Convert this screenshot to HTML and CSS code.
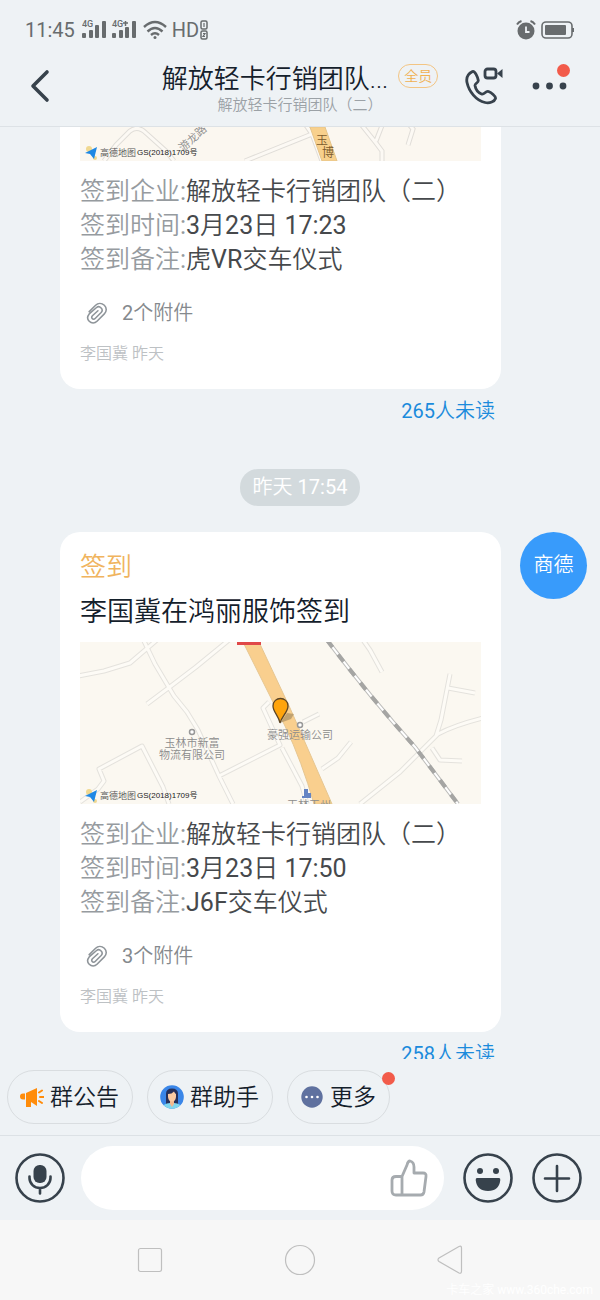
FILE: index.html
```html
<!DOCTYPE html>
<html lang="zh-CN">

<head>
  <meta charset="UTF-8">
  <meta name="viewport" content="width=device-width, initial-scale=1.0">
  <title>解放轻卡行销团队（二）</title>
  <link rel="stylesheet" href="styles.css">
</head>

<body>
  <div class="status-bar">
    <div class="status-left">
      <span class="clock">11:45</span>
      <svg width="56" height="20" viewBox="0 0 56 20" fill="#686c6e">
        <text x="0" y="7" class="net">4G</text>
        <rect x="0" y="13" width="4" height="5" rx="1" />
        <rect x="7" y="10" width="4" height="8" rx="1" />
        <rect x="13" y="5" width="4" height="13" rx="1" />
        <rect x="20" y="1" width="4" height="17" rx="1" />
        <text x="30" y="7" class="net">4G</text>
        <path d="M41 3h5M43.500 1v5" stroke="#686c6e" stroke-width="1.500" />
        <rect x="30" y="13" width="4" height="5" rx="1" />
        <rect x="37" y="10" width="4" height="8" rx="1" />
        <rect x="43" y="7" width="4" height="11" rx="1" />
        <rect x="50" y="1" width="4" height="17" rx="1" />
      </svg>
      <svg width="24" height="20" viewBox="0 0 24 20" fill="none" stroke="#686c6e" stroke-width="2.400">
        <path d="M1 7Q12-3 23 7M4.500 11.500Q12 4.500 19.500 11.500M8 15Q12 11.500 16 15" />
        <circle cx="12" cy="17.500" r="1.500" fill="#686c6e" stroke="none" />
      </svg>
      <span class="hd">HD</span>
      <svg width="8" height="20" viewBox="0 0 8 20">
        <rect x="1" y="1" width="6" height="8" rx="1.500" fill="none" stroke="#686c6e" stroke-width="1.500" />
        <rect x="1" y="11" width="6" height="8" rx="1.500" fill="none" stroke="#686c6e" stroke-width="1.500" />
        <path d="M4 3v4M3 13.500h2L3 16.500h2" fill="none" stroke="#686c6e" stroke-width="1.200" />
      </svg>
    </div>
    <div class="status-right">
      <svg width="20" height="20" viewBox="0 0 20 20">
        <circle cx="10" cy="11" r="8.500" fill="#686c6e" />
        <path d="M1 4.500Q2.500 2 5.500 1M19 4.500Q17.500 2 14.500 1" fill="none" stroke="#686c6e" stroke-width="2" />
        <path d="M10 6.500v5.500h3.500" fill="none" stroke="#eef2f5" stroke-width="1.800" />
      </svg>
      <svg width="34" height="18" viewBox="0 0 34 18">
        <rect x="1" y="1" width="30" height="16" rx="4" fill="none" stroke="#686c6e" stroke-width="1.600" />
        <rect x="4" y="4" width="21" height="10" rx="1" fill="#686c6e" />
        <rect x="31" y="7" width="2" height="4" fill="#686c6e" />
      </svg>
    </div>
  </div>

  <header class="header">
    <button class="icon-btn back" aria-label="返回">
      <svg width="20" height="34" viewBox="0 0 20 34" fill="none" stroke="#37424c" stroke-width="3.600"
        stroke-linecap="round" stroke-linejoin="round">
        <path d="M17 3L3 17l14 14" />
      </svg>
    </button>
    <div class="title-box">
      <div class="title-row">
        <h1>解放轻卡行销团队...</h1>
        <span class="tag">全员</span>
      </div>
      <p class="sub-title">解放轻卡行销团队（二）</p>
    </div>
    <div class="header-actions">
      <button class="icon-btn" aria-label="通话">
        <svg width="40" height="40" viewBox="0 0 40 40" fill="none" stroke="#37424c" stroke-width="2.800"
          stroke-linejoin="round">
          <path
            d="M8.500 5.500C4.500 7.500 2 11.500 3 16.500C5 25.500 12 34.500 21 36.500C26 37.500 30.500 35.500 31.500 32.500C32 30 27 26.500 24.500 25.500C21.500 24.500 20.500 29 17.500 28C14 26.500 11.500 22.500 11 19.500C10.800 17.500 14.500 16.500 14.300 14.500C14 12 11 4.500 8.500 5.500Z" />
          <rect x="21" y="3" width="11" height="9" rx="2.500" />
          <path d="M33 7.500l5.500-4.500v9Z" fill="#37424c" stroke="none" />
        </svg>
      </button>
      <button class="icon-btn more-btn" aria-label="更多设置">
        <svg width="36" height="8" viewBox="0 0 36 8" fill="#37424c">
          <circle cx="4" cy="4" r="3.400" />
          <circle cx="17.500" cy="4" r="3.400" />
          <circle cx="31" cy="4" r="3.400" />
        </svg>
        <i class="dot"></i>
      </button>
    </div>
  </header>

  <main class="messages">
    <div class="message">
      <div class="content">
        <div class="card card-cut">
          <svg class="map" viewBox="0 0 401 34">
            <rect width="401" height="34" fill="#fbf7f0" />
            <g fill="none" stroke="#e0ddd8" stroke-width="5">
              <path d="M24 34L36 18L50 4Q58-2 66 6L86 24L94 34M165 34L232 7L223-6M232 7L242 34M280-4L296 16L302 24V34M296 14L303-4M326-6L333 2L328 18" />
            </g>
            <g fill="none" stroke="#fcf9f4" stroke-width="3">
              <path d="M24 34L36 18L50 4Q58-2 66 6L86 24L94 34M165 34L232 7L223-6M232 7L242 34M280-4L296 16L302 24V34M296 14L303-4M326-6L333 2L328 18" />
            </g>
            <path d="M230 0h15l12 34h-15Z" fill="#f8d08c" stroke="#e5c48a" />
            <text x="236" y="18" class="map-label road">玉</text>
            <text x="242" y="30" class="map-label road">博</text>
            <text x="103" y="25" class="map-label" transform="rotate(-42 103 25)">游龙路</text>
            <circle cx="9" cy="22" r="3" fill="#f0d890" />
            <circle cx="15" cy="31" r="2" fill="#f0d890" />
            <path d="M17 20L5 26l5 1l4 5Z" fill="#1e88e5" />
            <text x="20" y="29" class="map-logo">高德地图</text>
            <text x="57" y="28" class="map-code">GS(2018)1709号</text>
          </svg>
          <dl class="fields">
            <div><dt>签到企业:</dt><dd>解放轻卡行销团队（二）</dd></div>
            <div><dt>签到时间:</dt><dd>3月23日 17:23</dd></div>
            <div><dt>签到备注:</dt><dd>虎VR交车仪式</dd></div>
          </dl>
          <div class="attach">
            <svg width="22" height="22" viewBox="0 0 24 24" fill="none" stroke="#8e9499" stroke-width="1.700"
              stroke-linecap="round" stroke-linejoin="round">
              <path d="M3.500 10.500L10.500 3.500C13 1 17 .8 20 3.500C23 6.500 22.500 10.500 20 13L12 21C9.500 23.500 6 23.500 3.500 21C1 18.500 1.500 15.500 3.500 13L11.500 6C13 4.800 15 5 16.500 6.500C18 8 17.800 10 16.500 11.500L10 18C9 19 7.500 19 6.800 18C6 17 6 16 7 15L13 9.500" />
            </svg>
            <span>2个附件</span>
          </div>
          <p class="from">李国冀 昨天</p>
        </div>
        <a class="unread" href="#">265人未读</a>
      </div>
    </div>

    <time class="time">昨天 17:54</time>

    <div class="message">
      <div class="content">
        <div class="card">
          <p class="card-type">签到</p>
          <h2 class="card-title">李国冀在鸿丽服饰签到</h2>
          <svg class="map" viewBox="0 0 401 162">
            <rect width="401" height="162" fill="#fbf8f1" />
            <g fill="none" stroke="#e4e2dd" stroke-width="5" stroke-linejoin="round">
              <path d="M-2 34L24 29L50 21L78-3M63-3L75 22L94 54L107 70L118 88L139 134L153 162M67 62L91 44L116 25L149-2M0 160L18 147L24 139L19 127L62 104L83 145L89 162M139 134L200 103L183 66L189 60" />
              <path d="M283-2L290 8L302 30M223 80L239 72M242 127L258 116L271 100M280 162L320 130L342 108L358 92Q375 83 403 76M356 94L361 78L370 32M368 46L395 51M352 106L360 118L382 119M202 106L222 144L227 162" />
            </g>
            <g fill="none" stroke="#fdfbf6" stroke-width="3" stroke-linejoin="round">
              <path d="M-2 34L24 29L50 21L78-3M63-3L75 22L94 54L107 70L118 88L139 134L153 162M67 62L91 44L116 25L149-2M0 160L18 147L24 139L19 127L62 104L83 145L89 162M139 134L200 103L183 66L189 60" />
              <path d="M283-2L290 8L302 30M223 80L239 72M242 127L258 116L271 100M280 162L320 130L342 108L358 92Q375 83 403 76M356 94L361 78L370 32M368 46L395 51M352 106L360 118L382 119M202 106L222 144L227 162" />
            </g>
            <!-- railway -->
            <path d="M247-2Q290 55 335 105L378 162" fill="none" stroke="#bdbdbb" stroke-width="4" />
            <path d="M247-2Q290 55 335 105L378 162" fill="none" stroke="#fff" stroke-width="2" />
            <path d="M247-2Q290 55 335 105L378 162" fill="none" stroke="#a5a5a3" stroke-width="4"
              stroke-dasharray="9 9" />
            <!-- main road -->
            <path d="M163 0h16l31 66l42 96h-18Q222 120 205 84Z" fill="#f9cf8e" stroke="#e6c691" />
            <rect x="157" y="0" width="24" height="3" fill="#e04848" />
            <path d="M200 81l7-10l7 1l-3 5Z" fill="#a98e62" opacity=".7" />
            <path d="M200 81C199 74 193 70 193 64C193 54 208 54 208 64C208 70 202 74 200 81Z" fill="#ffa40c"
              stroke="#5c4526" stroke-width="1.300" />
            <circle cx="112" cy="90" r="2.500" fill="#fff" stroke="#989898" stroke-width="1.500" />
            <circle cx="220" cy="83" r="2.500" fill="#fff" stroke="#989898" stroke-width="1.500" />
            <text x="112" y="105" class="map-label mid">玉林市新富</text>
            <text x="112" y="117" class="map-label mid">物流有限公司</text>
            <text x="220" y="97" class="map-label mid">豪强运输公司</text>
            <path d="M222 156v-2h2v-7h4v4h3v5Z" fill="#6484c4" />
            <text x="229" y="167" class="map-label mid">玉林玉州</text>
            <circle cx="9" cy="150" r="3" fill="#f0d890" />
            <circle cx="15" cy="159" r="2" fill="#f0d890" />
            <path d="M17 148L5 154l5 1l4 5Z" fill="#1e88e5" />
            <text x="20" y="157" class="map-logo">高德地图</text>
            <text x="57" y="156" class="map-code">GS(2018)1709号</text>
          </svg>
          <dl class="fields">
            <div><dt>签到企业:</dt><dd>解放轻卡行销团队（二）</dd></div>
            <div><dt>签到时间:</dt><dd>3月23日 17:50</dd></div>
            <div><dt>签到备注:</dt><dd>J6F交车仪式</dd></div>
          </dl>
          <div class="attach">
            <svg width="22" height="22" viewBox="0 0 24 24" fill="none" stroke="#8e9499" stroke-width="1.700"
              stroke-linecap="round" stroke-linejoin="round">
              <path d="M3.500 10.500L10.500 3.500C13 1 17 .8 20 3.500C23 6.500 22.500 10.500 20 13L12 21C9.500 23.500 6 23.500 3.500 21C1 18.500 1.500 15.500 3.500 13L11.500 6C13 4.800 15 5 16.500 6.500C18 8 17.800 10 16.500 11.500L10 18C9 19 7.500 19 6.800 18C6 17 6 16 7 15L13 9.500" />
            </svg>
            <span>3个附件</span>
          </div>
          <p class="from">李国冀 昨天</p>
        </div>
        <a class="unread" href="#">258人未读</a>
      </div>
      <div class="avatar">商德</div>
    </div>
  </main>

  <div class="shortcuts">
    <button class="chip">
      <svg width="24" height="24" viewBox="0 0 24 24" fill="#ff8c0a">
        <path d="M3 8.500h2v6H3Q0 14.500 0 11.500T3 8.500ZM6 8L17 3v18l-6-4v5H6v-7Z" />
        <path d="M19 7.500l3-2M20 12h4M19 16l3 2" stroke="#ff8c0a" stroke-width="2" stroke-linecap="round" />
      </svg>
      <span>群公告</span>
    </button>
    <button class="chip">
      <svg width="24" height="24" viewBox="0 0 24 24">
        <clipPath id="face">
          <circle cx="12" cy="12" r="11.800" />
        </clipPath>
        <g clip-path="url(#face)">
          <rect width="24" height="24" fill="#3a86e8" />
          <path d="M6 19V9Q6 3.500 12 3.500T18 9v10Z" fill="#26305a" />
          <path d="M2 24Q3 18 10 18h4Q21 18 22 24Z" fill="#7fd6ee" />
          <path d="M10 14h4v5l-2 3l-2-3Z" fill="#f2b98e" />
          <path d="M8 9Q12 9 14 6.500Q15 8.500 16 9v3Q15.500 16.500 12 16.500T8 12Z" fill="#fbcaa2" />
        </g>
      </svg>
      <span>群助手</span>
    </button>
    <button class="chip">
      <svg width="24" height="24" viewBox="0 0 24 24">
        <circle cx="12" cy="12" r="10.700" fill="#5f719f" />
        <g fill="#fff">
          <circle cx="6.500" cy="12" r="1.300" />
          <circle cx="12" cy="12" r="1.300" />
          <circle cx="17.500" cy="12" r="1.300" />
        </g>
      </svg>
      <span>更多</span>
      <i class="dot"></i>
    </button>
  </div>

  <div class="input-bar">
    <button class="icon-btn" aria-label="语音">
      <svg width="50" height="50" viewBox="0 0 50 50" fill="none" stroke="#37424c" stroke-width="2.600"
        stroke-linecap="round">
        <circle cx="25" cy="25" r="23.500" />
        <rect x="18.500" y="12" width="13" height="18" rx="6" fill="#37424c" stroke="none" />
        <path d="M14.500 23.500v1.500a10.500 10 0 0 0 21 0v-1.500M25 35v5.500" />
      </svg>
    </button>
    <div class="input-box">
      <input type="text" aria-label="消息">
      <button class="icon-btn" aria-label="点赞">
        <svg width="38" height="38" viewBox="0 0 38 38" fill="none" stroke="#a6abaf" stroke-width="2.800"
          stroke-linejoin="round">
          <path d="M12 17.500L17 6Q18 2 20 2Q24 3 24 8V14H33Q36.500 14 36 17.500L34 33Q33.500 36 30.500 36H6Q2 36 2 32V21Q2 17.500 6 17.500H12M12 17.500V36" />
        </svg>
      </button>
    </div>
    <button class="icon-btn" aria-label="表情">
      <svg width="50" height="50" viewBox="0 0 50 50">
        <circle cx="25" cy="25" r="23.500" fill="none" stroke="#37424c" stroke-width="2.600" />
        <circle cx="17" cy="18" r="3" fill="#37424c" />
        <circle cx="33" cy="18" r="3" fill="#37424c" />
        <path d="M14 25h22q1.500 0 1.300 2Q36 38 25 38T12.700 27Q12.500 25 14 25Z" fill="#37424c" />
      </svg>
    </button>
    <button class="icon-btn" aria-label="添加">
      <svg width="50" height="50" viewBox="0 0 50 50" fill="none" stroke="#37424c" stroke-width="2.600"
        stroke-linecap="round">
        <circle cx="25" cy="25" r="23.500" />
        <path d="M25 13v25M13 25.500h24" />
      </svg>
    </button>
  </div>

  <nav class="nav-bar">
    <button class="icon-btn" aria-label="最近任务">
      <svg width="32" height="32" viewBox="0 0 32 32" fill="none" stroke="#bfbfbf" stroke-width="1.200">
        <rect x="4.500" y="4.500" width="23" height="23" rx="2" />
      </svg>
    </button>
    <button class="icon-btn" aria-label="主屏幕">
      <svg width="32" height="32" viewBox="0 0 32 32" fill="none" stroke="#bfbfbf" stroke-width="1.200">
        <circle cx="16" cy="16" r="14.500" />
      </svg>
    </button>
    <button class="icon-btn" aria-label="后退">
      <svg width="32" height="32" viewBox="0 0 32 32" fill="none" stroke="#bfbfbf" stroke-width="1.200">
        <path d="M25 2.500Q27.500 1.500 27.500 4V27Q27.500 30 25 29L5 17.500Q3 15.500 5 14Z" />
      </svg>
    </button>
    <span class="watermark">卡车之家 www.360che.com</span>
  </nav>
</body>

</html>
```
FILE: styles.css
```css
* {
  box-sizing: border-box;
  padding: 0;
  margin: 0;
}

html,
body {
  width: 100%;
  height: 100%;
}

body {
  display: flex;
  flex-direction: column;
  background-color: #eef2f5;
  color: #14202b;
  font-family: Roboto, "Noto Sans CJK SC DemiLight", "Noto Sans CJK SC", sans-serif;
  font-weight: 400;
}

svg {
  display: block;
  flex-shrink: 0;
}

button {
  border: none;
  background: none;
  color: inherit;
  font: inherit;
}

.icon-btn {
  display: flex;
  align-items: center;
  justify-content: center;
}

.dot {
  position: absolute;
  width: 13px;
  height: 13px;
  border-radius: 50%;
  background-color: #f25b4a;
}

/* 状态栏 */
.status-bar {
  display: flex;
  justify-content: space-between;
  align-items: center;
  padding: 18px 25px 0;
  height: 42px;
  color: #686c6e;
}

.status-left,
.status-right {
  display: flex;
  align-items: center;
  gap: 5px;
}

.clock {
  font-size: 20px;
  margin-right: 2px;
}

.hd {
  font-size: 20px;
  margin-right: -4px;
}

.net {
  font-size: 9px;
  font-weight: 500;
}

/* 标题栏 */
.header {
  display: grid;
  grid-template-columns: 1fr auto 1fr;
  padding: 15px 30px 11px;
  height: 85px;
  border-bottom: 1px solid #dde2e6;
}

.back {
  justify-self: start;
}

.title-row {
  display: flex;
  align-items: center;
  gap: 10px;
  height: 38px;
}

.title-row h1 {
  font-size: 26px;
  font-weight: 350;
}

.tag {
  height: 24px;
  padding: 0 5px;
  border: 1px solid #f3c583;
  border-radius: 12px;
  color: #f0b050;
  font-size: 14px;
  line-height: 22px;
}

.sub-title {
  color: #9ba1a6;
  font-size: 15px;
  font-weight: 300;
  line-height: 20px;
  text-align: center;
}

.header-actions {
  display: flex;
  justify-content: flex-end;
  align-items: center;
  gap: 28px;
}

.header-actions .icon-btn:last-child {
  margin-right: 2px;
}

.more-btn {
  position: relative;
}

.more-btn .dot {
  top: -18px;
  right: -2px;
}

/* 消息列表 */
.messages {
  flex: 1;
  min-height: 0;
  overflow-y: auto;
  scrollbar-width: none;
  display: flex;
  flex-direction: column;
}

.message {
  display: flex;
  align-items: flex-start;
  flex-shrink: 0;
  padding: 0 99px 0 60px;
  position: relative;
}

.content {
  flex: 1;
  display: flex;
  flex-direction: column;
}

.card {
  padding: 17px 20px 23px;
  border-radius: 20px;
  background-color: #fff;
}

.card-cut {
  padding-top: 0;
  border-top-left-radius: 0;
  border-top-right-radius: 0;
}

.card-type {
  color: #f0b45e;
  font-size: 26px;
  line-height: 36px;
}

.card-title {
  margin: 9px 0 12px;
  font-size: 27px;
  font-weight: 350;
  line-height: 36px;
}

.map {
  width: 100%;
  height: auto;
}

.map-label {
  fill: #8b8b8b;
  font-size: 11px;
}

.mid {
  text-anchor: middle;
}

.road {
  fill: #7a5a2c;
  font-size: 12px;
}

.map-logo {
  fill: #555;
  font-size: 9px;
}

.map-code {
  fill: #222;
  font-family: "Liberation Sans", "Noto Sans CJK SC", sans-serif;
  font-size: 8px;
}

.fields {
  margin-top: 14px;
  font-size: 25px;
  line-height: 34px;
}

.fields div {
  display: flex;
}

.fields dt {
  color: #969b9f;
}

.fields dd {
  color: #46494c;
}

.attach {
  display: flex;
  align-items: center;
  gap: 14px;
  margin-top: 22px;
  padding-left: 6px;
  color: #85898d;
  font-size: 20px;
  line-height: 28px;
}

.from {
  margin-top: 15px;
  color: #bdc1c4;
  font-size: 16px;
  line-height: 24px;
}

.unread {
  align-self: flex-end;
  margin: 8px 6px 0 0;
  color: #1b8bdc;
  font-size: 20px;
  line-height: 28px;
  text-decoration: none;
}

.time {
  align-self: center;
  margin: 44px 0 26px;
  padding: 0 13px;
  border-radius: 18px;
  background-color: #d3dadd;
  color: #fff;
  font-size: 20px;
  line-height: 37px;
}

.avatar {
  position: absolute;
  top: 0;
  right: 13px;
  width: 67px;
  height: 67px;
  border-radius: 50%;
  background-color: #389bfb;
  color: #fff;
  font-size: 20px;
  line-height: 67px;
  text-align: center;
}

/* 快捷入口 */
.shortcuts {
  display: flex;
  gap: 14px;
  padding: 11px 7px;
  border-bottom: 1px solid #dce1e5;
}

.chip {
  position: relative;
  display: flex;
  align-items: center;
  gap: 6px;
  height: 54px;
  padding: 0 13px 0 12px;
  border: 1px solid #d9dde0;
  border-radius: 27px;
  font-size: 23px;
}

.chip span {
  padding-bottom: 4px;
}

.chip .dot {
  top: 1px;
  right: -6px;
}

/* 输入栏 */
.input-bar {
  display: flex;
  align-items: center;
  gap: 19px;
  padding: 10px 18px 10px 15px;
}

.input-box {
  flex: 1;
  min-width: 0;
  display: flex;
  align-items: center;
  height: 64px;
  margin-left: -3px;
  padding: 0 16px 0 24px;
  border-radius: 32px;
  background-color: #fff;
}

.input-box input {
  flex: 1;
  min-width: 0;
  height: 40px;
  border: none;
  outline: none;
  background: none;
  font: inherit;
  font-size: 24px;
}

/* 系统导航 */
.nav-bar {
  position: relative;
  display: grid;
  grid-template-columns: repeat(3, 1fr);
  height: 80px;
  padding: 0 12.5%;
  background-color: #f7f7f7;
}

.watermark {
  position: absolute;
  right: 7px;
  bottom: 3px;
  color: #fff;
  font-size: 12px;
}
```
